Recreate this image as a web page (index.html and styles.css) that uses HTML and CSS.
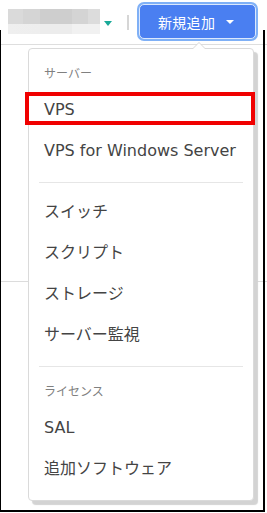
FILE: index.html
```html
<!DOCTYPE html>
<html lang="ja">
<head>
    <meta charset="UTF-8">
    <meta name="viewport" content="width=device-width, initial-scale=1.0">
    <title>新規追加</title>
    <link rel="stylesheet" href="styles.css">
</head>
<body>
    <div class="page">
        <header class="topbar">
            <div class="account">
                <span class="blur-row top"></span>
                <span class="blur-row bottom"></span>
            </div>
            <span class="account-caret"></span>
            <span class="divider-v"></span>
            <button class="add-btn">新規追加<span class="btn-caret"></span></button>
        </header>

        <div class="content">
            <div class="content-row"></div>
        </div>

        <div class="dropdown">
            <div class="group">
                <div class="group-title">サーバー</div>
                <div class="item">VPS</div>
                <div class="item">VPS for Windows Server</div>
            </div>
            <div class="group">
                <div class="item">スイッチ</div>
                <div class="item">スクリプト</div>
                <div class="item">ストレージ</div>
                <div class="item">サーバー監視</div>
            </div>
            <div class="group">
                <div class="group-title">ライセンス</div>
                <div class="item">SAL</div>
                <div class="item">追加ソフトウェア</div>
            </div>
        </div>

        <div class="highlight"></div>
        <div class="frame"></div>
    </div>
</body>
</html>
```

FILE: styles.css
```css
body {
    margin: 0;
    padding: 0;
    background: white;
    font-family: "Noto Sans CJK JP", sans-serif;
}

.page {
    position: relative;
    width: 267px;
    height: 513px;
    overflow: hidden;
}

.topbar {
    display: flex;
    align-items: center;
    height: 45px;
    padding-left: 8px;
    border-bottom: 1px solid #dedede;
    box-sizing: border-box;
}

.account {
    display: flex;
    flex-direction: column;
    width: 92px;
    height: 25px;
    margin-top: -1px;
}

.blur-row {
    display: block;
}

.blur-row.top {
    height: 15px;
    background: linear-gradient(to right, #dadada 0, #dadada 15px, #d5d5d5 15px, #d5d5d5 32px, #cecece 32px, #cecece 64px, #d4d4d4 64px, #d4d4d4 80px, #dcdcdc 80px);
}

.blur-row.bottom {
    height: 10px;
    background: linear-gradient(to right, #efefef 0, #eeeeee 32px, #ececec 32px, #ececec 64px, #f1f1f1 64px);
}

.account-caret {
    width: 0;
    height: 0;
    margin-left: 4px;
    margin-top: 2px;
    border-left: 4px solid transparent;
    border-right: 4px solid transparent;
    border-top: 5px solid #19a998;
}

.divider-v {
    width: 2px;
    height: 15px;
    margin-left: 15px;
    background: #d6d6d6;
}

.add-btn {
    display: flex;
    align-items: center;
    width: 117px;
    height: 35px;
    margin-left: 10px;
    margin-top: -1px;
    padding: 0 0 0 18px;
    background: #4a7ff1;
    color: white;
    border: 1px solid #dbe8fd;
    border-radius: 5px;
    box-shadow: 0 0 0 2px #7fb0f6;
    font-family: "Noto Sans CJK JP", sans-serif;
    font-size: 14px;
    letter-spacing: 0.3px;
    cursor: pointer;
}

.btn-caret {
    width: 0;
    height: 0;
    margin-left: 11px;
    margin-top: 1px;
    border-left: 4px solid transparent;
    border-right: 4px solid transparent;
    border-top: 4px solid white;
}

.content {
    padding-top: 236px;
}

.content-row {
    border-top: 1px solid #dcdcdc;
}

/* dropdown menu */
.dropdown {
    position: absolute;
    top: 48px;
    left: 28px;
    width: 224px;
    background: white;
    border: 1px solid #dadada;
    border-radius: 4px;
    box-shadow: 4px 4px 1px #d3d3d3;
}

.dropdown::before,
.dropdown::after {
    content: "";
    position: absolute;
    left: 163px;
    width: 0;
    height: 0;
    border-left: 7px solid transparent;
    border-right: 7px solid transparent;
}

.dropdown::before {
    top: -7px;
    border-bottom: 7px solid #d8d8d8;
}

.dropdown::after {
    top: -6px;
    border-bottom: 7px solid white;
}

.group {
    padding: 8px 0 11px;
}

.group + .group {
    border-top: 1px solid #e6e6e6;
    margin: 0 10px;
}

.group + .group .group-title,
.group + .group .item {
    padding-left: 5px;
}

.group-title {
    height: 32px;
    line-height: 32px;
    padding-left: 15px;
    font-size: 12px;
    color: #808080;
}

.item {
    height: 41px;
    line-height: 41px;
    padding-left: 15px;
    font-family: "DejaVu Sans", "Noto Sans CJK JP", sans-serif;
    font-size: 16px;
    color: #444;
    white-space: nowrap;
}

/* annotation box */
.highlight {
    position: absolute;
    top: 92px;
    left: 25px;
    width: 222px;
    height: 25px;
    border: 4px solid #f00000;
}

.frame {
    position: absolute;
    top: 30px;
    left: 0;
    right: 0;
    bottom: 0;
    border-left: 1px solid #000;
    border-right: 2px solid #000;
    border-bottom: 2px solid #000;
    margin-right: 2px;
    margin-bottom: 1px;
}
```
